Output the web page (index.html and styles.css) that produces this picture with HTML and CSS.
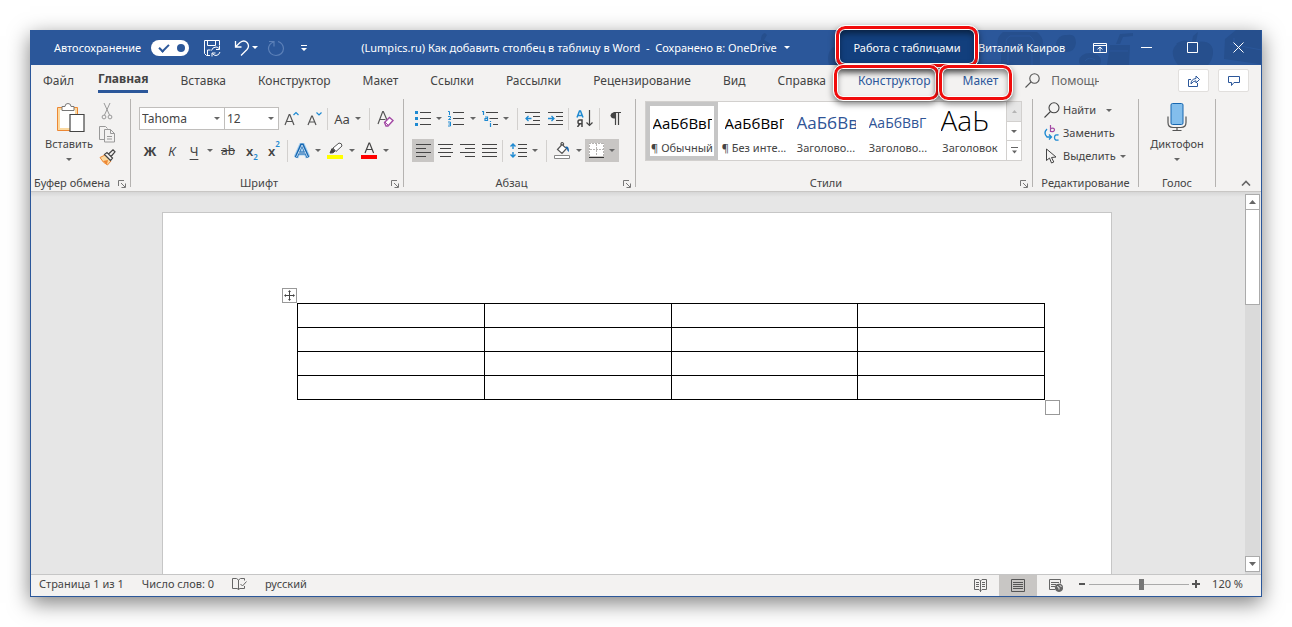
FILE: index.html
```html
<!DOCTYPE html>
<html lang="ru">
<head>
<meta charset="utf-8">
<title>Word</title>
<link rel="stylesheet" href="styles.css">
</head>
<body>
<main class="window">
  <header class="titlebar">
    <svg class="doodles" width="512" height="35" viewBox="0 0 512 35" aria-hidden="true">
      <path fill="#264f8d" d="M7 18q-1-6 5-8 0-6 4-7l2 2-3 5q8 3 7 8zM80 35q-3-12 4-18l6 3v15z"/>
      <g fill="#264f8d" transform="translate(124 0)">
        <path d="M128 35V22q-8-12 2-20h34q10 8 3 19v14z"/>
        <path d="M183 13q3-9 11-8 9-2 9 8-1 9-10 9-9 0-10-9z"/>
        <ellipse cx="217" cy="31" rx="11" ry="8"/>
        <path d="M234 35l3-20h20l-1 20zM243 14l4-10 13-1v3l-10 1-3 7z"/>
        <path d="M303 14q7-6 16-2l1-6 5-4-2 10q18-3 17 12-1 7-5 11h-30q-10-13-1-21z"/>
        <path d="M352 9l11-9h38l4 5v26l-12 4-42-6z"/>
      </g>
      <g fill="none" stroke="#2b579a" stroke-width="1" transform="translate(124 0)">
        <path d="M135 35V18q-5-8 2-12h20q7 6 2 12v17"/>
        <path d="M212 31q4-5 10-1M237 21h18M357 14l42 8M361 8v12"/>
      </g>
    </svg>
    <div class="quick">
      <label class="autosave">Автосохранение
        <input type="checkbox" class="toggle" checked>
      </label>
      <button class="qbtn" aria-label="Сохранить"><svg width="18" height="18" viewBox="0 0 18 18" fill="none" stroke="#fff"><path d="M7 16.500H3.500L1.500 14.500V1.500h15v5M4.500 1.500v5h8v-5M4.500 16v-5h3"/><path d="M8.500 11.500q1-3.500 4.500-3.500 2 0 3.500 2M16.500 7v3.500H13M17 13q-1 3.500-4 3.500-2 0-3.500-2M9 17.500v-3.500h3.500"/></svg></button>
      <button class="qbtn undo" aria-label="Отменить"><svg width="16" height="18" viewBox="0 0 16 18" fill="none" stroke="#fff" stroke-width="1.300"><path d="M1.500 2v6h6M1.700 7.800L6 3.500q4-3 7 0 3 3.500 0 7L7 16.500"/></svg></button>
      <i class="caret light"></i>
      <button class="qbtn redo" aria-label="Повторить"><svg width="18" height="18" viewBox="0 0 18 18" fill="none" stroke="#5c80b8" stroke-width="1.200"><path d="M2 2.500h5v5M6.500 3q-5 2-5 7 1 6 7.500 6.500 7-.5 7.500-7Q16 4 11 2.500"/></svg></button>
      <button class="qbtn more" aria-label="Настройка"><svg width="8" height="8" viewBox="0 0 8 8" fill="#fff"><path d="M1 1h6v1H1zM1 4h6L4 7z"/></svg></button>
    </div>
    <div class="doc-title">(Lumpics.ru) Как добавить столбец в таблицу в Word&nbsp; -&nbsp; Сохранено в: OneDrive <i class="caret light"></i></div>
    <div class="context">Работа с таблицами<span class="mark"></span></div>
    <div class="user">Виталий Каиров</div>
    <div class="controls">
      <button aria-label="Параметры ленты"><svg width="14" height="12" viewBox="0 0 14 12" fill="none" stroke="#fff"><path d="M.5 1.500h13v9H.5zM.5 3.500h13M7 9.500V5M4.500 7.300L7 5l2.500 2.300"/></svg></button>
      <button aria-label="Свернуть"><svg width="11" height="11" viewBox="0 0 11 11" stroke="#fff"><path d="M0 5.500h11"/></svg></button>
      <button aria-label="Развернуть"><svg width="11" height="11" viewBox="0 0 11 11" fill="none" stroke="#fff"><path d="M.5.500h10v10H.5z"/></svg></button>
      <button aria-label="Закрыть"><svg width="11" height="11" viewBox="0 0 11 11" stroke="#fff"><path d="M.5.500l10 10M10.500.500l-10 10"/></svg></button>
    </div>
  </header>

  <nav class="tabs">
    <a href="#" class="file">Файл</a>
    <a href="#" class="active">Главная</a>
    <a href="#">Вставка</a>
    <a href="#">Конструктор</a>
    <a href="#">Макет</a>
    <a href="#">Ссылки</a>
    <a href="#">Рассылки</a>
    <a href="#">Рецензирование</a>
    <a href="#">Вид</a>
    <a href="#">Справка</a>
    <a href="#" class="ctx">Конструктор<span class="mark"></span></a>
    <a href="#" class="ctx last">Макет<span class="mark"></span></a>
    <label class="help">
      <svg width="15" height="15" viewBox="0 0 15 15" fill="none" stroke="#555" stroke-width="1.100"><circle cx="9.500" cy="5.500" r="4.700"/><path d="M6 9L.5 14.500"/></svg>
      <span>Помощник</span>
    </label>
    <div class="share">
      <button aria-label="Поделиться"><svg width="12" height="12" viewBox="0 0 12 12" fill="none" stroke="#2b579a"><path d="M3 4.500H.5v7h9V8M3 9q0-5 5-5.500V1l3.500 3.500L8 8V5.800Q5 6 3 9z"/></svg></button>
      <button aria-label="Примечания"><svg width="12" height="12" viewBox="0 0 12 12" fill="none" stroke="#2b579a"><path d="M.5 1.500h11v6H6L3.500 10.500V7.500h-3z"/></svg></button>
    </div>
  </nav>

  <section class="ribbon">
    <div class="group clipboard">
      <div class="body">
        <button class="big"><svg width="32" height="32" viewBox="-4 0 32 32" fill="none"><path d="M.5 5.500h20v23H.5z" fill="#fbd9a0" stroke="#ed8733"/><path d="M3 8h15v18H3z" fill="#fff"/><path d="M5 8.500v-4h3q0-3 3-3t3 3h3v4z" fill="#fff" stroke="#777"/><path d="M13 12.500h14v17H13z" fill="#fff" stroke="#444" stroke-width="1.200"/></svg><span>Вставить</span><i class="caret"></i></button>
        <div class="stack">
          <button aria-label="Вырезать"><svg width="16" height="17" viewBox="0 0 16 17" fill="none" stroke="#999"><path d="M5 0l5.500 12M11 0L5.500 12"/><circle cx="5" cy="14" r="1.900"/><circle cx="11" cy="14" r="1.900"/></svg></button>
          <button aria-label="Копировать"><svg width="16" height="17" viewBox="0 0 16 17" fill="none" stroke="#999"><path d="M5.500 13.500h-5V.5h6l2 2"/><path d="M5.500 3.500h6l4 4v8.500h-10zM11.500 3.500v4h4M8 10.500h5M8 13h5"/></svg></button>
          <button aria-label="Формат по образцу"><svg width="17" height="17" viewBox="0 0 17 17" fill="none"><path d="M1 8.500l5-2.500 6 6-3.500 4Q4 14 1 8.500z" fill="#fbd9a0" stroke="#ed8733"/><path d="M4 12l5-1-1 4.500z" fill="#ed8733"/><path d="M5.500 5.500L8 3.500l5.500 5.500-2 2.500zM9.500 5L14 .8l2 2L12 7.500" stroke="#444" fill="#f3f2f1" stroke-width="1.200"/></svg></button>
        </div>
      </div>
      <div class="caption">Буфер обмена<button class="launch" aria-label="Буфер обмена"><svg width="8" height="8" viewBox="0 0 8 8" fill="none" stroke="#777"><path d="M.5 6V.5H6M3 3l4 4M7.500 3.500v4h-4"/></svg></button></div>
    </div>

    <div class="group fonts">
      <div class="body rows">
        <div class="row">
          <span class="combo wide"><select aria-label="Шрифт"><option>Tahoma</option></select></span>
          <span class="combo"><select aria-label="Размер"><option>12</option></select></span>
          <button class="w24" aria-label="Увеличить"><svg width="15" height="16" viewBox="0 0 15 16" fill="none"><path d="M1 14L5.200 3.500h.6L10 14M2.500 10.500h6" stroke="#555" stroke-width="1.200"/><path d="M9.500 4L12 1.500 14.500 4" stroke="#1e8ad2" stroke-width="1.200"/></svg></button>
          <button class="w22" aria-label="Уменьшить"><svg width="15" height="16" viewBox="0 0 15 16" fill="none"><path d="M1 14L4.700 5h.6L9 14M2.500 11h5" stroke="#555" stroke-width="1.200"/><path d="M9.500 1.500L12 4l2.500-2.500" stroke="#1e8ad2" stroke-width="1.200"/></svg></button>
          <i class="sep"></i>
          <button class="w24 letter">Aa</button><i class="caret"></i>
          <i class="space"></i><i class="sep"></i>
          <button class="w26" aria-label="Очистить"><svg width="17" height="17" viewBox="0 0 17 17" fill="none"><path d="M1 14L5.700 1.500h.6L10 10M3 9.500h5.500" stroke="#555" stroke-width="1.200"/><path d="M7.500 12.500l5-5 3.500 3-5 5.500H9z" fill="#fff" stroke="#a349a4" stroke-width="1.400"/><path d="M8 12l3 3" stroke="#a349a4"/></svg></button>
        </div>
        <div class="row">
          <button class="w22 letter bold">Ж</button>
          <button class="w22 letter ital">К</button>
          <button class="w22 letter under">Ч</button><i class="caret wide"></i>
          <button class="w26 letter strike"><s>ab</s></button>
          <button class="w22 letter semi">x<sub>2</sub></button>
          <button class="w22 letter semi">x<sup>2</sup></button>
          <i class="sep"></i>
          <button class="w24" aria-label="Эффекты"><svg width="16" height="16" viewBox="0 0 16 16" fill="none"><path d="M2 14.500L7.500 2h1L14 14.500M4.500 10h7" stroke="#a8d0f0" stroke-width="5"/><path d="M2 14.500L7.500 2h1L14 14.500M4.500 10h7" stroke="#1767b0" stroke-width="3"/><path d="M2.500 14L8 2l5.500 12M4.500 10h7" stroke="#e8f3fc" stroke-width=".8"/></svg></button><i class="caret"></i>
          <button class="w26" aria-label="Цвет выделения"><svg width="17" height="17" viewBox="0 0 17 17" fill="none"><path d="M3 11l2-4.500L8 9l-2 1.800z" fill="#444" stroke="#444"/><path d="M6 6l6-5q3 0 3 3L9 9.500z" fill="#fff" stroke="#555"/><path d="M0 13h16v4H0z" fill="#ff0"/></svg></button><i class="caret"></i>
          <button class="w26" aria-label="Цвет текста"><svg width="17" height="17" viewBox="0 0 17 17" fill="none"><path d="M4 11L8 1h.6l4 10M5.500 7.500h6" stroke="#444" stroke-width="1.200"/><path d="M0 13h16v4H0z" fill="red"/></svg></button><i class="caret"></i>
        </div>
      </div>
      <div class="caption">Шрифт<button class="launch" aria-label="Шрифт"><svg width="8" height="8" viewBox="0 0 8 8" fill="none" stroke="#777"><path d="M.5 6V.5H6M3 3l4 4M7.500 3.500v4h-4"/></svg></button></div>
    </div>

    <div class="group para">
      <div class="body rows">
        <div class="row">
          <button class="w22" aria-label="Маркеры"><svg width="16" height="16" viewBox="0 0 16 16"><path d="M0 0h3v3H0zM0 6h3v3H0zM0 12h3v3H0z" fill="#1e8ad2"/><path d="M5 1.500h11M5 7.500h11M5 13.500h11" stroke="#444"/></svg></button><i class="caret wide"></i>
          <button class="w24" aria-label="Нумерация"><svg width="16" height="17" viewBox="0 0 16 17" fill="none"><path d="M0 1.500h1.500V5M0 6.500h2.500v1.500L.5 9.500h2.500M0 12h2.500v4H0M.5 14h2" stroke="#1e8ad2"/><path d="M5 2.500h11M5 8.500h11M5 14.500h11" stroke="#444"/></svg></button><i class="caret wide"></i>
          <button class="w24" aria-label="Многоуровневый список"><svg width="16" height="17" viewBox="0 0 16 17" fill="none"><path d="M0 1.500h1.500V5M3 7h2.500v3.500H3V8.500h2.500M8.500 11v1M8.500 13v4" stroke="#1e8ad2" stroke-width="1.200"/><path d="M4 2.500h12M7.500 8.500H16M11 14.500h5" stroke="#444"/></svg></button><i class="caret"></i>
          <i class="space"></i><i class="sep"></i>
          <button class="w24" aria-label="Уменьшить отступ"><svg width="15" height="15" viewBox="0 0 15 15" fill="none"><path d="M0 1.500h15M8 5.500h7M8 9.500h7M0 13.500h15" stroke="#444"/><path d="M6.500 7.500H1M3.500 5L1 7.500 3.500 10" stroke="#1e8ad2" stroke-width="1.300"/></svg></button>
          <button class="w22" aria-label="Увеличить отступ"><svg width="15" height="15" viewBox="0 0 15 15" fill="none"><path d="M0 1.500h15M8 5.500h7M8 9.500h7M0 13.500h15" stroke="#444"/><path d="M0 7.500h6M3.500 5L6 7.500 3.500 10" stroke="#1e8ad2" stroke-width="1.300"/></svg></button>
          <i class="sep"></i>
          <button class="w26" aria-label="Сортировка"><svg width="17" height="17" viewBox="0 0 17 17" fill="none"><path d="M1 7.500L3.500 1h1L7 7.500M2 5.500h4" stroke="#1e8ad2" stroke-width="1.500"/><path d="M6 17V10H3.500q-1.500 0-1.500 2t1.500 1.800H6M4 13.500L1.500 17" stroke="#444" stroke-width="1.500"/><path d="M13.500 0v15.500M10.500 12.500l3 3 3-3" stroke="#444" stroke-width="1.200"/></svg></button>
          <i class="sep"></i>
          <button class="w26" aria-label="Знаки"><svg width="11" height="13" viewBox="0 0 11 13" fill="none"><path d="M5 6.500Q1 7 .5 3.500 1 .5 4 .5h1z" fill="#444"/><path d="M3.500.500H11M5.500.500V13M8.500.500V13" stroke="#444" stroke-width="1.200"/></svg></button>
        </div>
        <div class="row">
          <button class="w22 on" aria-label="По левому краю"><svg width="15" height="14" viewBox="0 0 15 14" stroke="#444"><path d="M0 .5h15M0 4.500h10M0 8.500h15M0 12.500h10"/></svg></button>
          <button class="w22" aria-label="По центру"><svg width="15" height="14" viewBox="0 0 15 14" stroke="#444"><path d="M0 .5h15M2 4.500h11M0 8.500h15M2 12.500h11"/></svg></button>
          <button class="w22" aria-label="По правому краю"><svg width="15" height="14" viewBox="0 0 15 14" stroke="#444"><path d="M0 .5h15M5 4.500h10M0 8.500h15M5 12.500h10"/></svg></button>
          <button class="w22" aria-label="По ширине"><svg width="15" height="14" viewBox="0 0 15 14" stroke="#444"><path d="M0 .5h15M0 4.500h15M0 8.500h15M0 12.500h15"/></svg></button>
          <i class="sep"></i>
          <button class="w26" aria-label="Интервал"><svg width="17" height="15" viewBox="0 0 17 15" fill="none"><path d="M3 1v5M.5 3.500L3 1l2.500 2.500M3 9v5M.5 11.500L3 14l2.500-2.500" stroke="#1e8ad2" stroke-width="1.400"/><path d="M8 1.500h9M8 5.500h9M8 9.500h9M8 13.500h9" stroke="#444"/></svg></button><i class="caret"></i>
          <i class="space"></i><i class="sep"></i>
          <button class="w26" aria-label="Заливка"><svg width="17" height="17" viewBox="0 0 17 17" fill="none"><path d="M3.500 7.500L8 2.500l4.500 4L8 11.500zM7 4V1.500q1-2 2.500 0V5" fill="#fff" stroke="#555" stroke-width="1.200"/><path d="M11 5q4-2 4 5-2-1-2-3z" fill="#1767b0"/><path d="M.5 13.500h15v3H.5z" fill="#fff" stroke="#888"/></svg></button><i class="caret"></i>
          <span class="pair on"><button class="w22" aria-label="Границы"><svg width="15" height="16" viewBox="0 0 15 16" fill="none"><path d="M0 0h15v13H0z" fill="#fff"/><path d="M.5 13V0M14.500 13V0M0 .5h15M7.500 1v12M1 6.500h13" stroke="#b5b3b1" stroke-dasharray="2 1"/><path d="M0 14.500h15" stroke="#333"/></svg></button><i class="caret wide"></i></span>
        </div>
      </div>
      <div class="caption">Абзац<button class="launch" aria-label="Абзац"><svg width="8" height="8" viewBox="0 0 8 8" fill="none" stroke="#777"><path d="M.5 6V.5H6M3 3l4 4M7.500 3.500v4h-4"/></svg></button></div>
    </div>

    <div class="group styles">
      <div class="body">
        <div class="gallery">
          <button class="style chosen"><b>АаБбВвГ</b><span>¶ Обычный</span></button>
          <button class="style"><b>АаБбВвГ</b><span>¶ Без инте...</span></button>
          <button class="style blue h1"><b>АаБбВв</b><span>Заголово...</span></button>
          <button class="style blue h2"><b>АаБбВвГ</b><span>Заголово...</span></button>
          <button class="style title"><b>АаЬ</b><span>Заголовок</span></button>
          <div class="updown">
            <button aria-label="Вверх" class="off"><svg width="5" height="3" viewBox="0 0 5 3" fill="#b5b5b5"><path d="M0 3L2.500 0 5 3z"/></svg></button>
            <button aria-label="Вниз"><i class="caret"></i></button>
            <button aria-label="Ещё"><svg width="7" height="7" viewBox="0 0 7 7" fill="#666"><path d="M0 0h7v1H0zM1 3.500h5L3.500 6.500z"/></svg></button>
          </div>
        </div>
      </div>
      <div class="caption">Стили<button class="launch" aria-label="Стили"><svg width="8" height="8" viewBox="0 0 8 8" fill="none" stroke="#777"><path d="M.5 6V.5H6M3 3l4 4M7.500 3.500v4h-4"/></svg></button></div>
    </div>

    <div class="group editing">
      <div class="body list">
        <button><svg width="16" height="16" viewBox="0 0 16 16" fill="none" stroke="#444" stroke-width="1.100"><circle cx="10" cy="5.800" r="5"/><path d="M6.500 9.500L.5 15.500"/></svg>Найти<i class="caret far"></i></button>
        <button><svg width="16" height="16" viewBox="0 0 16 16" fill="none"><path d="M6.500 0v7M6.500 3.500q4-1 4 1.300t-4 1.700" stroke="#a349a4" stroke-width="1.200"/><path d="M3 4Q-1 8 3 12h4M5 9.500L7.500 12 5 14.500M14.500 10q-4-1-4 2.500t4 2.500" stroke="#1e8ad2" stroke-width="1.300"/></svg>Заменить</button>
        <button><svg width="16" height="16" viewBox="0 0 16 16" fill="none" stroke="#444"><path d="M2.500 1v11.500l3-2.500 2 5 2.300-1L7.500 9.500l4.500-.5z"/></svg>Выделить<i class="caret"></i></button>
      </div>
      <div class="caption">Редактирование</div>
    </div>

    <div class="group voice">
      <div class="body">
        <button class="big"><svg width="20" height="32" viewBox="0 0 20 32" fill="none"><rect x="4" y="1.500" width="12" height="21" rx="1.500" fill="#83beec" stroke="#1767b0"/><path d="M1 14.500v6q0 5 5 5h8q5 0 5-5v-6M10 25.500v3M5.500 28.500h9" stroke="#555" stroke-width="1.200"/></svg><span>Диктофон</span><i class="caret"></i></button>
      </div>
      <div class="caption">Голос</div>
    </div>
    <div class="fold"><button aria-label="Свернуть ленту"><svg width="10" height="6" viewBox="0 0 10 6" fill="none" stroke="#666" stroke-width="1.600"><path d="M1 5.500l4-4 4 4"/></svg></button></div>
  </section>

  <section class="workspace">
    <div class="canvas">
      <article class="page">
        <div class="table-wrap">
          <span class="move"><svg width="13" height="13" viewBox="0 0 13 13" stroke="#444" fill="#444"><path d="M6.500 2v9M2 6.500h9"/><path d="M6.500 1L5 3h3zM6.500 12L5 10h3zM1 6.500L3 5v3zM12 6.500L10 5v3z" stroke="none"/></svg></span>
          <table class="grid">
            <tr><td></td><td></td><td></td><td></td></tr>
            <tr><td></td><td></td><td></td><td></td></tr>
            <tr><td></td><td></td><td></td><td></td></tr>
            <tr><td></td><td></td><td></td><td></td></tr>
          </table>
          <span class="resize"></span>
        </div>
      </article>
    </div>
    <div class="scrollbar">
      <button aria-label="Прокрутить вверх"><svg width="7" height="4" viewBox="0 0 7 4" fill="#666"><path d="M0 4l3.500-4L7 4z"/></svg></button>
      <div class="thumb"></div>
      <button class="down" aria-label="Прокрутить вниз"><svg width="7" height="4" viewBox="0 0 7 4" fill="#666"><path d="M0 0h7L3.500 4z"/></svg></button>
    </div>
  </section>

  <footer class="status">
    <span>Страница 1 из 1</span>
    <span>Число слов: 0</span>
    <svg width="15" height="13" viewBox="0 0 15 13" fill="none" stroke="#666"><path d="M12.500 8v2.500h-5L6.500 12 5.500 10.500H.5v-10h4l2 1.500 2-1.500h4v2M6.500 2v9M8.500 6l2 2L14.500 3.500"/></svg>
    <span>русский</span>
    <div class="views">
      <button aria-label="Режим чтения"><svg width="13" height="13" viewBox="0 0 13 13" fill="none" stroke="#666"><path d="M6.500 2v11M6.500 2L5 .5H.5v10H5l1.500 1.500L8 10.500h4.500V.5H8zM2 3.500h3M2 5.500h3M2 7.500h3M8 3.500h3M8 5.500h3M8 7.500h3"/></svg></button>
      <button class="on" aria-label="Разметка страницы"><svg width="14" height="13" viewBox="0 0 14 13" fill="none" stroke="#555"><path d="M.5.500h13v12H.5zM2 3.500h10M2 5.500h10M2 7.500h10M2 9.500h10"/></svg></button>
      <button aria-label="Веб-документ"><svg width="14" height="13" viewBox="0 0 14 13" fill="none" stroke="#666"><path d="M6 10.500H.5V.5h11v4M2 3.500h8M2 5.500h5M2 7.500h4"/><circle cx="10" cy="8.800" r="3.700" fill="#666"/><path d="M8 7.500l2 1v2M10.500 6l2 2" stroke="#f3f2f1"/></svg></button>
    </div>
    <div class="zoom">
      <button aria-label="Уменьшить масштаб"><svg width="8" height="8" viewBox="0 0 8 8" stroke="#555" stroke-width="2"><path d="M1 4h6"/></svg></button>
      <input type="range" min="0" max="100" value="53" aria-label="Масштаб">
      <button aria-label="Увеличить масштаб"><svg width="8" height="8" viewBox="0 0 8 8" stroke="#555" stroke-width="2"><path d="M0 4h8M4 0v8"/></svg></button>
      <span>120 %</span>
    </div>
  </footer>
</main>
</body>
</html>
```
FILE: styles.css
```css
* { box-sizing: border-box; }
body {
  margin: 0;
  padding: 30px;
  background: #fff;
  color: #444;
  font-family: "Noto Sans", "Open Sans", sans-serif;
  font-size: 11px;
  line-height: 16px;
}
button, select, input { font: inherit; color: inherit; margin: 0; padding: 0; }
button {
  border: 0;
  background: none;
  display: flex;
  align-items: center;
  justify-content: center;
}
svg { display: block; flex: none; }
.window {
  display: flex;
  flex-direction: column;
  min-height: calc(100vh - 60px);
  border: 1px solid #2b579a;
  border-top: 0;
  background: #f3f2f1;
  box-shadow: 0 6px 20px rgba(0, 0, 0, .5);
}
.caret {
  flex: none;
  width: 8px;
  display: flex;
  justify-content: center;
}
.caret::before {
  content: "";
  border: 3px solid transparent;
  border-top-color: #666;
  border-bottom: 0;
}
.caret.light::before { border-top-color: #fff; }
.caret.wide { width: 10px; }

/* title bar */
.titlebar {
  position: relative;
  display: flex;
  height: 35px;
  background: #2b579a;
  color: #fff;
  align-items: center;
}
.doodles { position: absolute; right: 0; top: 0; }
.quick { display: flex; align-items: center; padding-left: 23px; }
.autosave { display: flex; align-items: center; gap: 10px; width: 135px; }
.toggle {
  appearance: none;
  width: 38px;
  height: 16px;
  border-radius: 8px;
  position: relative;
  background: #fff;
}
.toggle::before {
  content: "";
  position: absolute;
  left: 8px;
  top: 4px;
  width: 8px;
  height: 4px;
  border: solid #2b579a;
  border-width: 0 0 2px 2px;
  transform: rotate(-45deg);
}
.toggle::after {
  content: "";
  position: absolute;
  right: 4px;
  top: 4px;
  width: 8px;
  height: 8px;
  border-radius: 4px;
  background: #2b579a;
}
.qbtn { width: 18px; height: 24px; margin-left: 14px; }
.qbtn.undo { margin-left: 12px; }
.qbtn.redo { margin-left: 8px; }
.qbtn.more { margin-left: 10px; }
.doc-title {
  position: relative;
  flex: 1;
  display: flex;
  align-items: center;
  justify-content: center;
  gap: 6px;
  white-space: nowrap;
}
.context {
  position: relative;
  width: 136px;
  height: 35px;
  background: #123f7d;
  line-height: 35px;
  text-align: center;
}
.user { position: relative; width: 102px; padding-left: 3px; white-space: nowrap; }
.controls { position: relative; display: flex; }
.controls button { width: 46px; height: 35px; }
.mark {
  position: absolute;
  z-index: 2;
  border: 3px solid #f10c0c;
  border-radius: 9px;
  outline: 1px solid #fff;
  box-shadow: 0 3px 6px 1px rgba(0, 0, 0, .5), inset 0 0 0 1px #fff, inset 0 4px 6px rgba(0, 0, 0, .5);
}
.context .mark { inset: -4px -3px -2px -3px; }

/* tabs */
.tabs {
  display: flex;
  align-items: center;
  height: 31px;
  gap: 32px;
  padding: 0 12px;
  font-size: 12px;
}
.tabs a {
  position: relative;
  color: #444;
  text-decoration: none;
  line-height: 25px;
}
.tabs .file { margin-right: -8px; }
.tabs .active { font-weight: 700; border-bottom: 3px solid #2b579a; line-height: 22px; }
.tabs .ctx { color: #2b579a; }
.tabs .ctx .mark { inset: -3px -8px -7px -24px; }
.tabs .last .mark { right: -14px; }
.help { display: flex; align-items: center; gap: 11px; margin-left: -5px; }
.help span { width: 48px; overflow: hidden; color: #666; }
.share { display: flex; gap: 9px; margin-left: auto; }
.share button {
  width: 31px;
  height: 23px;
  background: #fff;
  border: 1px solid #e1dfdd;
  border-radius: 2px;
}

/* ribbon */
.ribbon {
  display: flex;
  height: 96px;
  padding-top: 3px;
  border-bottom: 1px solid #c8c6c4;
}
.group {
  display: flex;
  flex-direction: column;
  position: relative;
  flex: none;
  height: 88px;
  border-right: 1px solid #b5b3b1;
}
.body { flex: 1; display: flex; }
.caption {
  display: flex;
  justify-content: center;
  position: relative;
  height: 16px;
  line-height: 16px;
  margin-bottom: -4px;
  white-space: nowrap;
}
.launch { position: absolute; right: 4px; top: 5px; }
.clipboard { width: 100px; }
.clipboard .caption { justify-content: flex-start; padding-left: 3px; }
.fonts { width: 273px; }
.fonts .caption, .para .caption, .styles .caption { padding-right: 16px; }
.para { width: 232px; }
.styles { flex: 1; }
.editing { width: 106px; }
.voice { width: 77px; }
.big { flex-direction: column; justify-content: flex-start; padding-top: 3px; }
.big span { margin-top: 2px; }
.big .caret { margin-top: 6px; }
.clipboard .big { width: 64px; margin-left: 6px; }
.voice .big { flex: 1; }
.stack { display: flex; flex-direction: column; gap: 6px; padding-top: 4px; width: 12px; }
.stack button { height: 17px; }
.rows { flex-direction: column; gap: 9px; padding: 8px 0 0 8px; }
.row { display: flex; align-items: center; height: 23px; }
.row button { height: 23px; }
.w22 { width: 22px; }
.w24 { width: 24px; }
.w26 { width: 26px; }
.sep { width: 1px; height: 22px; margin: 0 2px; background: #d2d0ce; }
.space { width: 5px; }
.on { background: #c8c6c4; }
.pair { display: flex; align-items: center; margin-left: 2px; padding-right: 2px; }
.letter { font-size: 13px; }
.bold { font-weight: 700; }
.ital { font-style: italic; }
.under { text-decoration: underline; text-underline-offset: 3px; }
.strike { font-size: 12px; }
.semi { font-weight: 600; }
.semi sub, .semi sup { font-size: 8px; line-height: 8px; color: #1e8ad2; }
.semi sub { align-self: flex-end; padding-bottom: 1px; }
.semi sup { align-self: flex-start; padding-top: 1px; }
.combo { position: relative; width: 55px; height: 23px; margin-left: -1px; }
.combo.wide { width: 86px; margin-left: 0; }
.combo select {
  appearance: none;
  width: 100%;
  height: 23px;
  border: 1px solid #c0bebc;
  border-radius: 0;
  background: #fff;
  padding-left: 2px;
  font-size: 12px;
}
.combo::after {
  content: "";
  position: absolute;
  right: 5px;
  top: 10px;
  border: 3px solid transparent;
  border-top-color: #666;
  border-bottom: 0;
}
.gallery {
  display: flex;
  flex: 1;
  height: 60px;
  margin: 2px 10px 0 9px;
  border: 1px solid #d2d0ce;
  background: #fff;
}
.style {
  flex: 1;
  min-width: 0;
  flex-direction: column;
  overflow: hidden;
  white-space: nowrap;
  justify-content: flex-end;
}
.style b {
  width: 59px;
  overflow: hidden;
  margin-bottom: 4px;
  color: #000;
  text-align: left;
  font-family: "Open Sans", "Noto Sans", sans-serif;
  font-weight: 400;
  font-size: 15px;
  line-height: 26px;
}
.style span { line-height: 16px; margin-bottom: 4px; }
.style.chosen { box-shadow: inset 0 0 0 4px #c6c6c6; }
.style.blue b { color: #2f5496; }
.style.h1 b { font-size: 17px; }
.style.h2 b { font-size: 14px; }
.style.title b { font-size: 28px; font-weight: 300; line-height: 32px; }
.updown { width: 15px; display: flex; flex-direction: column; }
.updown button { flex: 1; border-left: 1px solid #d2d0ce; border-bottom: 1px solid #d2d0ce; }
.updown button:last-child { border-bottom: 0; }
.updown .off { background: #e6e6e6; }
.list { flex-direction: column; gap: 7px; padding: 3px 0 0 11px; }
.list button { justify-content: flex-start; gap: 3px; height: 16px; }
.list .far { margin-left: 6px; }
.fold { display: flex; align-items: flex-end; justify-content: flex-end; width: 45px; padding: 0 10px 5px 0; }

/* document */
.workspace { flex: 1; display: flex; background: linear-gradient(#d6d6d6, #e6e6e6 5px); }
.canvas { flex: 1; display: flex; justify-content: center; padding: 20px 2px 0 0; }
.page {
  width: 950px;
  background: #fff;
  border: 1px solid #c6c6c6;
  border-bottom: 0;
  padding: 90px 66px 0 134px;
}
.table-wrap { position: relative; }
.grid { width: 100%; border-collapse: collapse; table-layout: fixed; }
.grid td { height: 24px; padding: 0; border: 1px solid #000; }
.move, .resize {
  position: absolute;
  width: 15px;
  height: 15px;
  border: 1px solid #999;
  background: #fff;
}
.move { right: 100%; bottom: 100%; }
.resize { left: 100%; top: 100%; }
.scrollbar {
  width: 16px;
  display: flex;
  flex-direction: column;
  background: #dadada;
  border-right: 1px solid #e6e6e6;
  padding: 2px 0;
}
.scrollbar button, .thumb { height: 16px; border: 1px solid #ababab; background: #fff; }
.scrollbar .thumb { height: 96px; margin-top: -1px; }
.scrollbar .down { margin-top: auto; }

/* status bar */
.status {
  display: flex;
  align-items: center;
  height: 22px;
  gap: 18px;
  padding: 0 18px 3px 8px;
  border-top: 1px solid #c6c6c6;
}
.views { display: flex; margin-left: auto; align-self: stretch; margin-bottom: -3px; }
.views button { width: 38px; }
.zoom { display: flex; align-items: center; margin-left: -18px; }
.zoom button { width: 14px; }
.zoom span { margin-left: 9px; }
.zoom input { appearance: none; width: 100px; height: 12px; background: linear-gradient(#aaa, #aaa) center / 100% 1px no-repeat; }
.zoom input::-webkit-slider-thumb { appearance: none; width: 5px; height: 11px; background: #777; }
```
